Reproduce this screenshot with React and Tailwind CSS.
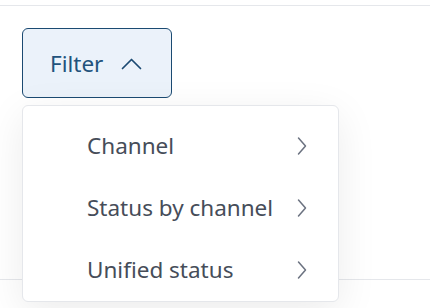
import React from "react";

function ChevronRight() {
  return (
    <svg width="10" height="20" viewBox="0 0 10 20" fill="none" className="shrink-0">
      <path d="M1.5 2 L8.5 10 L1.5 18" stroke="#6b7280" strokeWidth="1.5" strokeLinecap="round" strokeLinejoin="round" />
    </svg>
  );
}

function ChevronUp() {
  return (
    <svg width="21" height="12" viewBox="0 0 21 12" fill="none">
      <path d="M1.5 10.5 L10.5 1.5 L19.5 10.5" stroke="#1b4a72" strokeWidth="1.7" strokeLinecap="round" strokeLinejoin="round" />
    </svg>
  );
}

export default function App() {
  const items = ["Channel", "Status by channel", "Unified status"];
  return (
    <div className="relative w-[430px] h-[308px] overflow-hidden bg-white" style={{ fontFamily: '"Noto Sans", sans-serif' }}>
      <div className="mt-[5px] border-t border-[#e5e7eb]" />
      <div className="pl-[22px] pt-[22px]">
        <button className="flex h-[70px] w-[150px] items-center gap-[18px] rounded-md border border-[#1b4a72] bg-[#ebf2fa] pl-[27px] pt-[1px] text-[22.5px] text-[#22527c]">
          <span>Filter</span>
          <ChevronUp />
        </button>
      </div>
      <div className="mt-[181px] border-t border-[#e5e7eb]" />
      <div className="absolute left-[22px] top-[105px] w-[317px] rounded-md border border-[#e5e7eb] bg-white pt-[9px] shadow-[0_10px_40px_rgba(0,0,0,0.08)]">
        {items.map((t) => (
          <div key={t} className="flex h-[62px] items-center justify-between pl-[64px] pr-[31px] text-[22.5px] text-[#464d59]">
            <span>{t}</span>
            <ChevronRight />
          </div>
        ))}
      </div>
    </div>
  );
}
